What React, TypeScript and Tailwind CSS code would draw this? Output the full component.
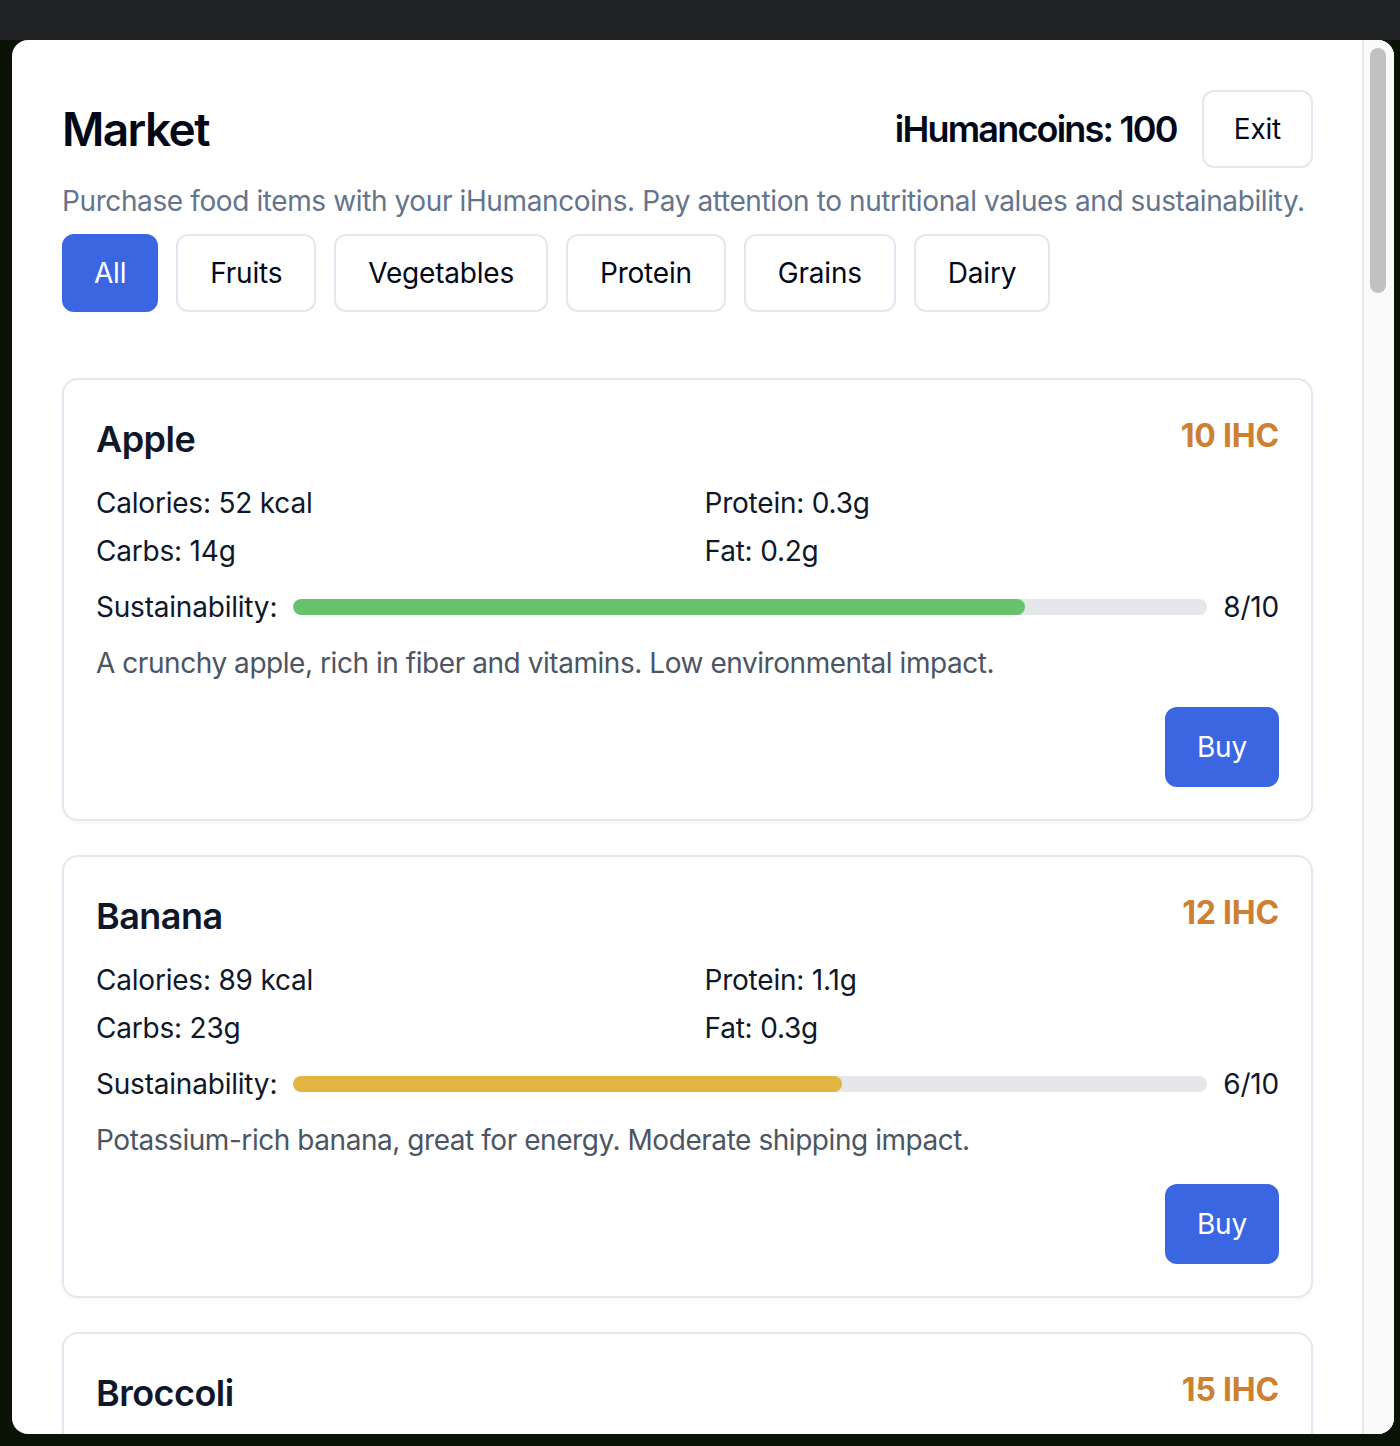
import React, { useState } from 'react'

type Item = {
    name: string
    price: number
    calories: number
    protein: string
    carbs: string
    fat: string
    sustainability: number
    description: string
}

const items: Item[] = [
    {
        name: 'Apple',
        price: 10,
        calories: 52,
        protein: '0.3g',
        carbs: '14g',
        fat: '0.2g',
        sustainability: 8,
        description: 'A crunchy apple, rich in fiber and vitamins. Low environmental impact.',
    },
    {
        name: 'Banana',
        price: 12,
        calories: 89,
        protein: '1.1g',
        carbs: '23g',
        fat: '0.3g',
        sustainability: 6,
        description: 'Potassium-rich banana, great for energy. Moderate shipping impact.',
    },
    {
        name: 'Broccoli',
        price: 15,
        calories: 34,
        protein: '2.8g',
        carbs: '7g',
        fat: '0.4g',
        sustainability: 9,
        description: 'Nutrient-dense green vegetable, packed with vitamin C. Grown locally.',
    },
]

const categories = ['All', 'Fruits', 'Vegetables', 'Protein', 'Grains', 'Dairy']

const barColor = (score: number) => {
    if (score >= 8) return 'bg-[#66c36b]'
    if (score >= 5) return 'bg-[#e2b540]'
    return 'bg-[#e0574f]'
}

const ItemCard = ({ item }: { item: Item }) => (
    <div className="rounded-[16px] border-2 border-[#e2e8f0] bg-white p-[32px] shadow-[0_2px_4px_rgba(15,23,42,0.04)]">
        <div className="flex items-start justify-between">
            <h3 className="text-[36px] leading-[54px] font-semibold tracking-[-0.015em] text-[#0f172a]">{item.name}</h3>
            <span className="text-[32px] leading-[48px] font-bold text-[#cd7f32]">{item.price} IHC</span>
        </div>

        <div className="mt-[17px] grid grid-cols-2 gap-x-[34px] gap-y-[8px] text-[28px] leading-[40px] text-[#0f172a]">
            <div>Calories: {item.calories} kcal</div>
            <div>Protein: {item.protein}</div>
            <div>Carbs: {item.carbs}</div>
            <div>Fat: {item.fat}</div>
        </div>

        <div className="mt-[16px] flex items-center text-[28px] leading-[40px] text-[#0f172a]">
            <span>Sustainability:</span>
            <div className="mx-[16px] h-[16px] flex-1 overflow-hidden rounded-full bg-[#e5e7eb]">
                <div
                    className={`h-full rounded-full ${barColor(item.sustainability)}`}
                    style={{ width: `${item.sustainability * 10}%` }}
                />
            </div>
            <span>{item.sustainability}/10</span>
        </div>

        <p className="mt-[16px] text-[28px] leading-[40px] tracking-[-0.016em] text-[#4b5563]">{item.description}</p>

        <div className="mt-[24px] flex justify-end">
            <button className="h-[80px] rounded-[12px] bg-[#3b66e2] px-[32px] text-[28px] text-white">
                Buy
            </button>
        </div>
    </div>
)

export default function App() {
    const [active, setActive] = useState('All')

    return (
        <div
            className="h-[1446px] w-full overflow-hidden bg-[linear-gradient(to_bottom,#1f2123_40px,#0b1206_40px)] pt-[40px] pl-[12px] tracking-[-0.013em]"
            style={{ fontFamily: 'Inter, "Noto Sans", sans-serif' }}
        >
            <div className="flex h-[1394px] w-[1382px] overflow-hidden rounded-[16px] bg-white">
                <div className="flex-1 overflow-hidden pt-[50px] pl-[50px] pr-[49px]">
                    <div className="flex h-[78px] items-center justify-between">
                        <h1 className="text-[46px] font-semibold tracking-[-0.035em] text-[#020817]">Market</h1>
                        <div className="flex items-center gap-[25px]">
                            <span className="text-[36px] font-semibold tracking-[-0.05em] text-[#020817]">
                                iHumancoins: 100
                            </span>
                            <button className="h-[78px] rounded-[12px] border-2 border-[#e2e8f0] px-[30px] text-[28px] text-[#020817]">
                                Exit
                            </button>
                        </div>
                    </div>

                    <p className="mt-[13px] whitespace-nowrap text-[28px] leading-[40px] tracking-[-0.014em] text-[#64748b]">
                        Purchase food items with your iHumancoins. Pay attention to nutritional values and sustainability.
                    </p>

                    <div className="mt-[13px] flex gap-[18px]">
                        {categories.map((c) => (
                            <button
                                key={c}
                                onClick={() => setActive(c)}
                                className={
                                    c === active
                                        ? 'h-[78px] rounded-[12px] border-2 border-[#3b66e2] bg-[#3b66e2] px-[30px] text-[28px] text-white'
                                        : 'h-[78px] rounded-[12px] border-2 border-[#e2e8f0] bg-white px-[32px] text-[28px] text-[#020817]'
                                }
                            >
                                {c}
                            </button>
                        ))}
                    </div>

                    <div className="mt-[66px] flex flex-col gap-[34px]">
                        {items.map((item) => (
                            <ItemCard key={item.name} item={item} />
                        ))}
                    </div>
                </div>

                <div className="w-[32px] shrink-0 border-l-2 border-[#e8e8e8] bg-[#fafafa] pt-[8px] pl-[6px]">
                    <div className="h-[245px] w-[16px] rounded-full bg-[#c1c1c1]" />
                </div>
            </div>
        </div>
    )
}
